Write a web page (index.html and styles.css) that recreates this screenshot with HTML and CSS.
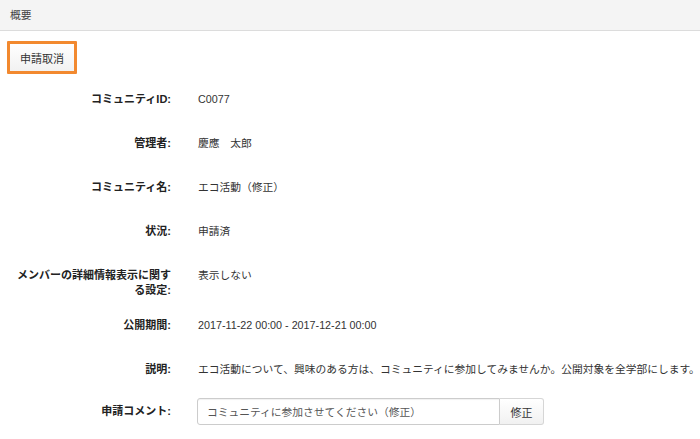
FILE: index.html
```html
<!DOCTYPE html>
<html lang="ja">
<head>
<meta charset="utf-8">
<link rel="stylesheet" href="styles.css">
</head>
<body>
<div class="header">概要</div>
<div class="content">
  <div class="actions">
    <button class="btn btn-focus">申請取消</button>
  </div>
  <div class="form">
    <div class="row">
      <div class="label">コミュニティID:</div>
      <div class="value">C0077</div>
    </div>
    <div class="row">
      <div class="label">管理者:</div>
      <div class="value">慶應　太郎</div>
    </div>
    <div class="row">
      <div class="label">コミュニティ名:</div>
      <div class="value">エコ活動（修正）</div>
    </div>
    <div class="row">
      <div class="label">状況:</div>
      <div class="value">申請済</div>
    </div>
    <div class="row">
      <div class="label">メンバーの詳細情報表示に関する設定:</div>
      <div class="value">表示しない</div>
    </div>
    <div class="row">
      <div class="label">公開期間:</div>
      <div class="value">2017-11-22 00:00 - 2017-12-21 00:00</div>
    </div>
    <div class="row">
      <div class="label">説明:</div>
      <div class="value nowrap">エコ活動について、興味のある方は、コミュニティに参加してみませんか。公開対象を全学部にします。</div>
    </div>
    <div class="row row-input">
      <div class="label">申請コメント:</div>
      <div class="input-group">
        <input class="input" type="text" value="コミュニティに参加させてください（修正）">
        <button class="btn btn-addon">修正</button>
      </div>
    </div>
  </div>
</div>
</body>
</html>
```
FILE: styles.css
```css
* { box-sizing: border-box; }
html, body { margin: 0; padding: 0; background: #fff; overflow: hidden; }
body {
  font-family: "Liberation Sans", "Noto Sans CJK JP", sans-serif;
  font-size: 10.75px;
  color: #333;
  width: 700px;
}
.header {
  height: 31px;
  background: #f4f4f4;
  border-bottom: 1px solid #dcdcdc;
  padding: 0 10px;
  line-height: 30px;
  color: #444;
}
.content { padding: 10px 0 0 7px; }
.actions { display: flex; }
.btn {
  font-family: inherit;
  font-size: 11px;
  color: #333;
  background: linear-gradient(#ffffff, #f1f1f1);
  border: 1px solid #d6d6d6;
  border-radius: 3px;
  cursor: pointer;
}
.btn-focus {
  height: 33px;
  padding: 0 10px;
  border: 3px solid #f2892f;
  border-radius: 1px;
}
.form {
  display: flex;
  flex-direction: column;
  gap: 10px;
  margin-top: 11px;
}
.row {
  display: flex;
  min-height: 34px;
  align-items: flex-start;
}
.label {
  width: 158px;
  margin-left: 6px;
  text-align: right;
  font-weight: bold;
  font-size: 11px;
  line-height: 15px;
  padding: 7px 0 3px;
  color: #222;
}
.value {
  margin-left: 27px;
  padding-top: 7px;
  line-height: 15px;
}
.nowrap { white-space: nowrap; }
.row-input { align-items: center; min-height: 27px; margin-top: -1px; }
.row-input .label { padding: 0; }
.input-group { display: flex; margin-left: 26px; }
.input {
  width: 303px;
  height: 27px;
  border: 1px solid #ccc;
  border-radius: 3px 0 0 3px;
  padding: 0 9px;
  font-family: inherit;
  font-size: 10.75px;
  color: #555;
  box-shadow: inset 0 1px 1px rgba(0,0,0,0.06);
}
.btn-addon {
  height: 27px;
  width: 44px;
  border-left: none;
  border-radius: 0 3px 3px 0;
  padding: 0;
}
```
